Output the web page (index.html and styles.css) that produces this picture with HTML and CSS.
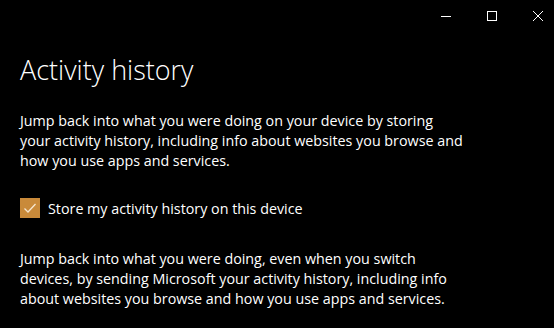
FILE: index.html
```html
<!DOCTYPE html>
<html lang="en">
<head>
    <meta charset="UTF-8">
    <title>Activity history</title>
    <link rel="stylesheet" href="styles.css">
</head>
<body>
    <div class="titlebar">
        <button class="caption-btn" aria-label="Minimize">
            <svg width="10" height="10" viewBox="0 0 10 10"><path d="M0 5.5h10" stroke="#fff" stroke-width="1"/></svg>
        </button>
        <button class="caption-btn" aria-label="Maximize">
            <svg width="10" height="10" viewBox="0 0 10 10"><rect x="0.5" y="0.5" width="9" height="9" fill="none" stroke="#fff" stroke-width="1"/></svg>
        </button>
        <button class="caption-btn" aria-label="Close">
            <svg width="10" height="10" viewBox="0 0 10 10"><path d="M0 0L10 10M10 0L0 10" stroke="#fff" stroke-width="1"/></svg>
        </button>
    </div>

    <div class="content">
        <h1>Activity history</h1>

        <p class="desc">Jump back into what you were doing on your device by storing<br>
            your activity history, including info about websites you browse and<br>
            how you use apps and services.</p>

        <label class="checkbox">
            <span class="box">
                <svg width="20" height="20" viewBox="0 0 20 20"><path d="M4.5 10.5l3.5 3.5 7.5-8" fill="none" stroke="#f6e6cf" stroke-width="1.3"/></svg>
            </span>
            Store my activity history on this device
        </label>

        <p class="desc">Jump back into what you were doing, even when you switch<br>
            devices, by sending Microsoft your activity history, including info<br>
            about websites you browse and how you use apps and services.</p>
    </div>
</body>
</html>
```

FILE: styles.css
```css
body {
    margin: 0;
    background-color: #000;
    color: #fff;
    font-family: 'Open Sans', 'Noto Sans', sans-serif;
    overflow: hidden;
}

.titlebar {
    display: flex;
    justify-content: flex-end;
    height: 32px;
    margin-right: -7px;
}

.caption-btn {
    width: 46px;
    height: 32px;
    padding: 0;
    border: none;
    background: none;
    display: flex;
    align-items: center;
    justify-content: center;
}

.content {
    padding: 0 20px;
}

h1 {
    font-size: 27px;
    font-weight: 300;
    margin: 18px 0 0;
    line-height: 40px;
}

.desc {
    font-size: 14.3px;
    line-height: 20px;
    margin: 0;
    white-space: nowrap;
}

h1 + .desc {
    margin-top: 21px;
}

.checkbox {
    display: flex;
    align-items: center;
    gap: 8px;
    font-size: 14.3px;
    margin: 27px 0 31px;
}

.box {
    width: 20px;
    height: 20px;
    background-color: #c98a3a;
    display: block;
}

.box svg {
    display: block;
}
```
